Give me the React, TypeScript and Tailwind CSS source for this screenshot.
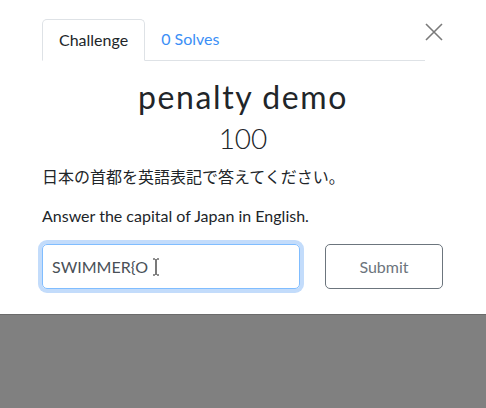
import { useState } from "react";

export default function App() {
  const [flag, setFlag] = useState("SWIMMER{O");

  return (
    <div
      className="flex h-[408px] w-[486px] flex-col overflow-hidden"
      style={{ fontFamily: "Lato, 'Noto Sans CJK JP', sans-serif" }}
    >
      <div className="h-[314px] bg-white px-[42px] text-[#212529]">
        {/* tabs + close */}
        <div className="flex items-start pt-[19px]">
          <ul className="flex flex-1 border-b border-[#dee2e6]">
            <li className="-mb-px rounded-t-[5px] border border-[#dee2e6] border-b-white bg-white px-4 py-2 text-base leading-6">
              Challenge
            </li>
            <li className="px-4 py-2 text-base leading-6 text-[#3b8ff6]">
              0 Solves
            </li>
          </ul>
          <button className="-ml-[1px] mt-[3px] flex h-[20px] w-[20px] items-center justify-center text-[#7a7a7a]">
            <svg width="18" height="18" viewBox="0 0 18 18" fill="none">
              <path
                d="M1 1L17 17M17 1L1 17"
                stroke="currentColor"
                strokeWidth="1.6"
              />
            </svg>
          </button>
        </div>

        <h2 className="mt-[16px] text-center text-[32px] leading-[40px] font-normal tracking-[1.6px] text-[#212529]">
          penalty demo
        </h2>
        <h3 className="mt-[3px] text-center text-[28px] leading-[36px] font-light text-[#212529]">
          100
        </h3>
        <p className="mt-[9px] text-base leading-6">
          日本の首都を英語表記で答えてください。
        </p>
        <p className="mt-[15px] text-base leading-6">
          Answer the capital of Japan in English.
        </p>

        <div className="mt-[16px] flex items-center gap-[25px]">
          <div className="relative">
            <input
              autoFocus
              value={flag}
              onChange={(e) => setFlag(e.target.value)}
              className="h-[45px] w-[258px] rounded-[5px] border border-[#80bdff] px-[9px] text-base text-[#495057] caret-[#212529] shadow-[0_0_0_4px_#c3dcfb] outline-none"
              style={{ fontFamily: "Lato, sans-serif" }}
            />
            <svg
              className="pointer-events-none absolute left-[110px] top-[14px]"
              width="8"
              height="18"
              viewBox="0 0 8 18"
              fill="none"
            >
              <path
                d="M1 1H3M5 1H7M4 1V17M1 17H3M5 17H7"
                stroke="#222"
                strokeWidth="1.2"
              />
            </svg>
          </div>
          <button className="h-[45px] w-[118px] rounded-[5px] border border-[#6c757d] text-[16px] text-[#6c757d]">
            Submit
          </button>
        </div>
      </div>
      <div className="flex-1 border-t border-[#6b6b6b] bg-[#808080]" />
    </div>
  );
}
